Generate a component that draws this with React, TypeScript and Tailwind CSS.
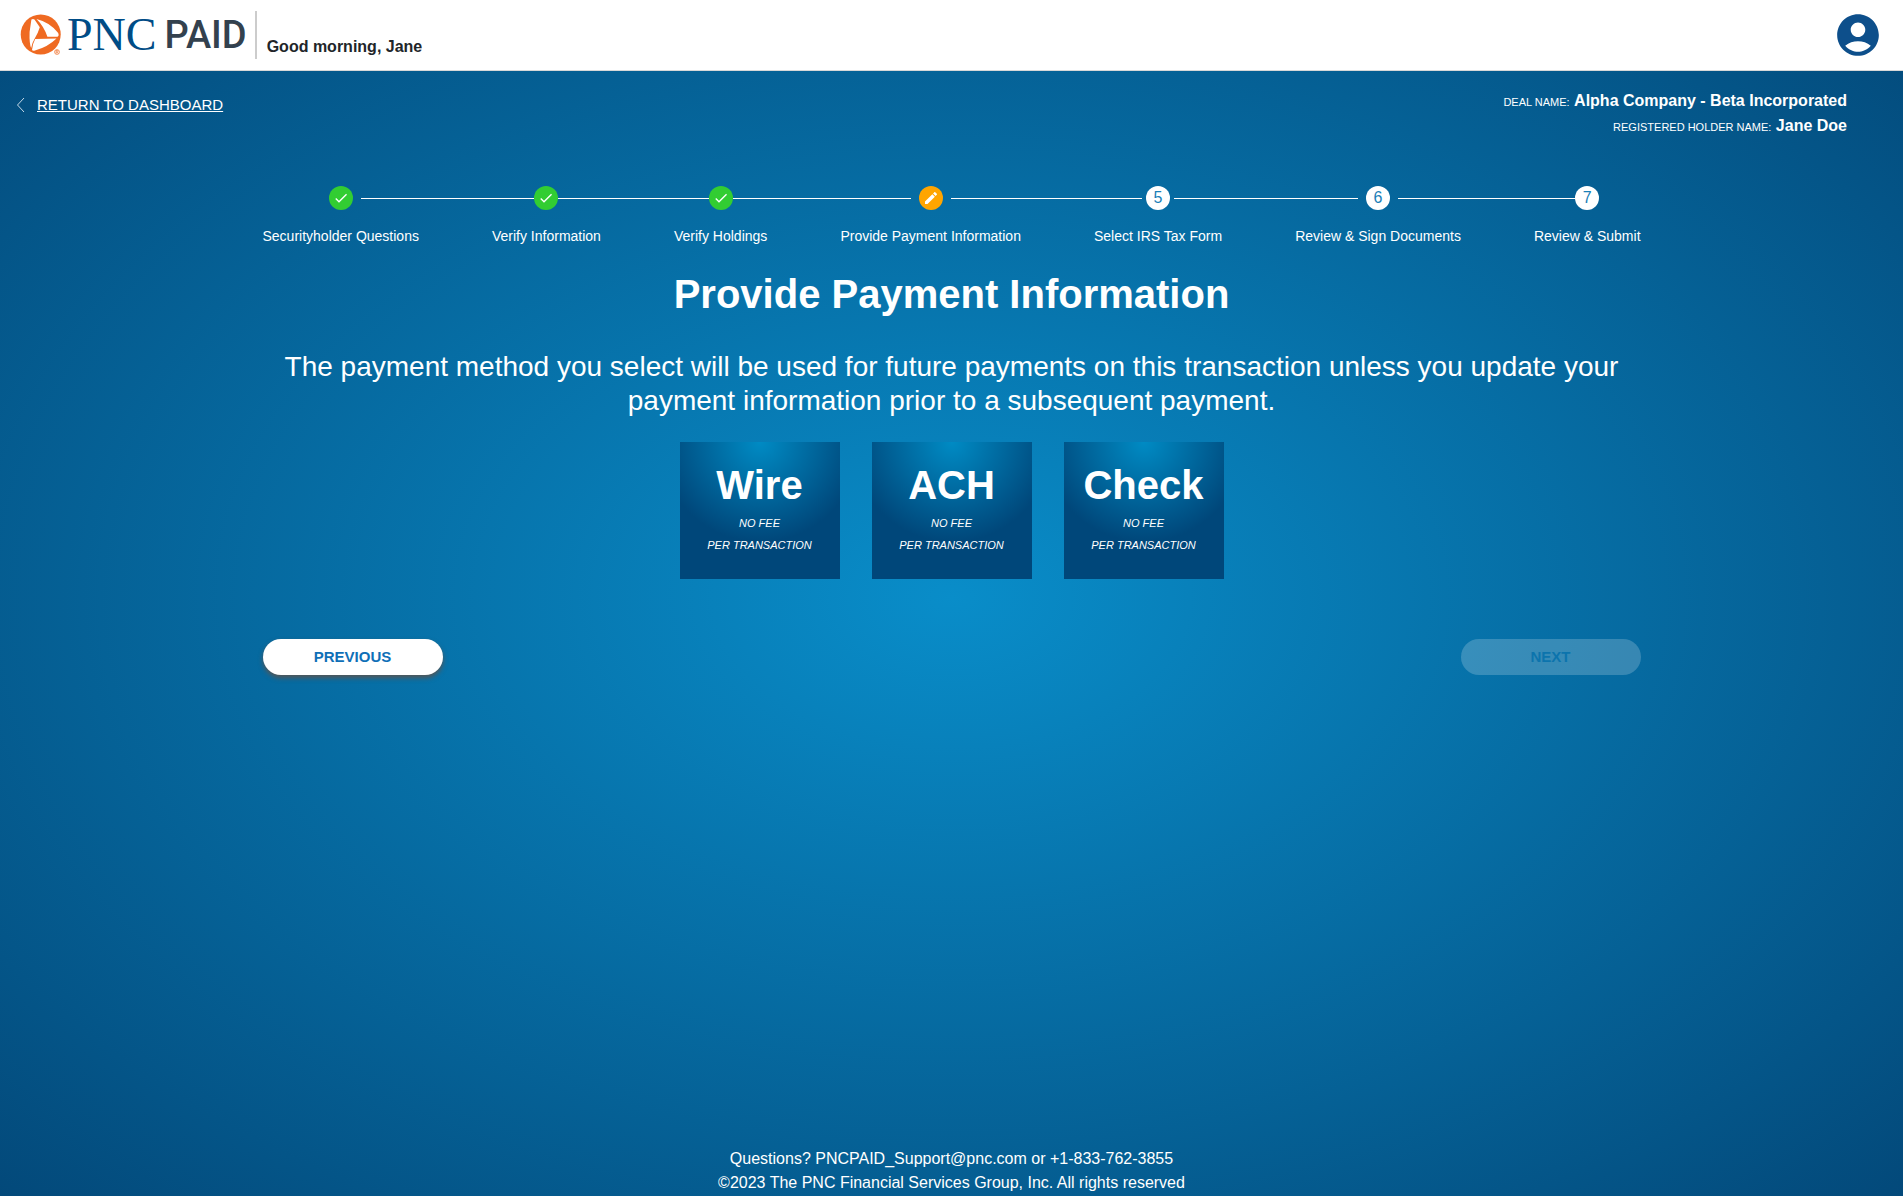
import { Fragment } from 'react';

const STEPS = [
  { label: 'Securityholder Questions', state: 'done', left: 'mr-2', right: 'ml-2' },
  { label: 'Verify Information', state: 'done', left: '', right: '' },
  { label: 'Verify Holdings', state: 'done', left: '', right: '' },
  { label: 'Provide Payment Information', state: 'edit', left: 'mr-2', right: 'ml-2' },
  { label: 'Select IRS Tax Form', state: 'todo', left: 'mr-1', right: 'ml-1' },
  { label: 'Review & Sign Documents', state: 'todo', left: 'mr-2', right: 'ml-2' },
  { label: 'Review & Submit', state: 'todo', left: '', right: '' },
];

const METHODS = ['Wire', 'ACH', 'Check'];

const STEP_COLORS: Record<string, string> = {
  done: 'bg-[#32cd32] text-white',
  edit: 'bg-[#ffa500] text-white',
  todo: 'bg-white text-[#1a80b8]',
};

const Logo = () => (
  <div className="flex items-center">
    <svg viewBox="0 0 42 42" className="size-[42px]" aria-hidden="true">
      <circle cx="20.7" cy="20.5" r="20" fill="#ef6a22" />
      <path d="M11.4 5.6Q13 4.4 14.5 5.6L19.8 13.2Q18 19 15 24Q12.4 28 11.2 34Q9.2 30 9.6 18Z" fill="#fff" />
      <path d="M16.5 5Q30 8.4 38 18.8Q39.5 21.6 37.5 22.8H27.4Q24 12.4 16.5 5Z" fill="#fff" />
      <path d="M15.2 25Q27 25 36.5 24.6Q28 33 15 36.6Q12.5 37.2 12 36Q12.4 30 15.2 25Z" fill="#fff" />
      <circle cx="37" cy="38" r="3.2" fill="#fff" />
      <circle cx="37" cy="38" r="2.4" fill="none" stroke="#ef6a22" strokeWidth=".7" />
      <path d="M36.2 39.5v-3h1q.8.1.8.8t-.8.8h-1m1 0l.9 1.4" fill="none" stroke="#ef6a22" strokeWidth=".6" />
    </svg>
    <span className="ml-[5px] font-['Liberation_Serif',serif] text-[46px] leading-[50px] text-[#004c86]">PNC</span>
    <span className="ml-2 font-[Roboto,sans-serif] text-[38px] leading-[50px] font-medium text-[#33414e]">PAID</span>
  </div>
);

const StepIcon = ({ state, number }: { state: string; number: number }) => {
  if (state === 'done') {
    return (
      <svg viewBox="0 0 24 24" className="size-4" fill="currentColor" aria-hidden="true">
        <path d="M9 16.17L4.83 12l-1.42 1.41L9 19 21 7l-1.41-1.41z" />
      </svg>
    );
  }
  if (state === 'edit') {
    return (
      <svg viewBox="0 0 24 24" className="size-4" fill="currentColor" aria-hidden="true">
        <path d="M3 17.25V21h3.75L17.81 9.94l-3.75-3.75L3 17.25zM20.71 7.04a.996.996 0 0 0 0-1.41l-2.34-2.34a.996.996 0 0 0-1.41 0l-1.83 1.83 3.75 3.75 1.83-1.83z" />
      </svg>
    );
  }
  return <>{number}</>;
};

const Stepper = () => (
  <ol className="flex items-start">
    {STEPS.map((step, i) => (
      <Fragment key={step.label}>
        {i > 0 && <li aria-hidden="true" className="mt-3 h-px flex-1 bg-white" />}
        <li>
          <div className="flex h-6 items-center">
            <span className={`h-px flex-1 ${step.left} ${i > 0 ? 'bg-white' : ''}`} />
            <span className={`flex size-6 items-center justify-center rounded-full text-base leading-6 ${STEP_COLORS[step.state]}`}>
              <StepIcon state={step.state} number={i + 1} />
            </span>
            <span className={`h-px flex-1 ${step.right} ${i < STEPS.length - 1 ? 'bg-white' : ''}`} />
          </div>
          <p className="mt-4 text-sm whitespace-nowrap">{step.label}</p>
        </li>
      </Fragment>
    ))}
  </ol>
);

export default function App() {
  return (
    <div className="flex min-h-screen flex-col bg-[radial-gradient(ellipse,#098dc9_0%,#03497a_100%)] font-['Liberation_Sans',Arial,sans-serif] text-white">
      <header className="flex h-[71px] items-center justify-between border-b border-[#d8d8d8] bg-white px-5">
        <div className="flex items-center">
          <Logo />
          <div className="ml-2 flex h-12 items-end border-l-2 border-[#cccccc] pl-2.5">
            <p className="text-base font-bold text-[#212529]">Good morning, Jane</p>
          </div>
        </div>
        <button type="button" aria-label="Account" className="text-[#0d4f8b]">
          <svg viewBox="0 0 24 24" className="size-[50px]" fill="currentColor" aria-hidden="true">
            <path d="M12 2C6.48 2 2 6.48 2 12s4.48 10 10 10 10-4.48 10-10S17.52 2 12 2zm0 4c1.93 0 3.5 1.57 3.5 3.5S13.93 13 12 13s-3.5-1.57-3.5-3.5S10.07 6 12 6zm0 14c-2.03 0-4.43-.82-6.14-2.88a9.947 9.947 0 0 1 12.28 0C16.43 19.18 14.03 20 12 20z" />
          </svg>
        </button>
      </header>

      <div className="flex items-start justify-between pt-[18px] pr-14 pl-4">
        <a href="#" className="mt-1 flex items-center gap-3 text-[15px] leading-6">
          <svg viewBox="0 0 9 16" className="h-4 w-[9px]" fill="none" stroke="#c4d9e8" aria-hidden="true">
            <path d="M8 1L1.5 8L8 15" />
          </svg>
          <span className="underline">RETURN TO DASHBOARD</span>
        </a>
        <div className="text-right text-base leading-6">
          <p><span className="text-[11px]">DEAL NAME:</span> <strong>Alpha Company - Beta Incorporated</strong></p>
          <p><span className="text-[11px]">REGISTERED HOLDER NAME:</span> <strong>Jane Doe</strong></p>
        </div>
      </div>

      <main className="mx-auto mt-[47px] w-full max-w-[1378px] flex-1">
        <Stepper />
        <h1 className="mt-6 text-center text-[40px] leading-[48px] font-bold">Provide Payment Information</h1>
        <p className="mt-8 text-center text-[28px] leading-[34px]">
          The payment method you select will be used for future payments on this transaction unless you update your payment information prior to a subsequent payment.
        </p>
        <div className="mt-6 flex justify-center gap-8">
          {METHODS.map((name) => (
            <button
              key={name}
              type="button"
              className="flex h-[137px] w-40 flex-col items-center justify-start bg-[radial-gradient(circle_at_top,#008bc4_0%,#00477a_100px)] pt-4"
            >
              <span className="text-[40px] leading-[54px] font-bold">{name}</span>
              <span className="text-[11px] leading-[22px] italic">NO FEE</span>
              <span className="text-[11px] leading-[22px] italic">PER TRANSACTION</span>
            </button>
          ))}
        </div>
        <div className="mt-[60px] flex justify-between">
          <button type="button" className="h-9 w-[180px] rounded-full bg-white text-[15px] font-bold text-[#0f6fb7] shadow-[0_3px_5px_#555]">
            PREVIOUS
          </button>
          <button type="button" disabled className="h-9 w-[180px] rounded-full bg-white/20 text-[15px] font-bold text-[#0c74ad]">
            NEXT
          </button>
        </div>
      </main>

      <footer className="pb-px text-center text-base leading-6">
        <p>Questions? PNCPAID_Support@pnc.com or +1-833-762-3855</p>
        <p>©2023 The PNC Financial Services Group, Inc. All rights reserved</p>
      </footer>
    </div>
  );
}
